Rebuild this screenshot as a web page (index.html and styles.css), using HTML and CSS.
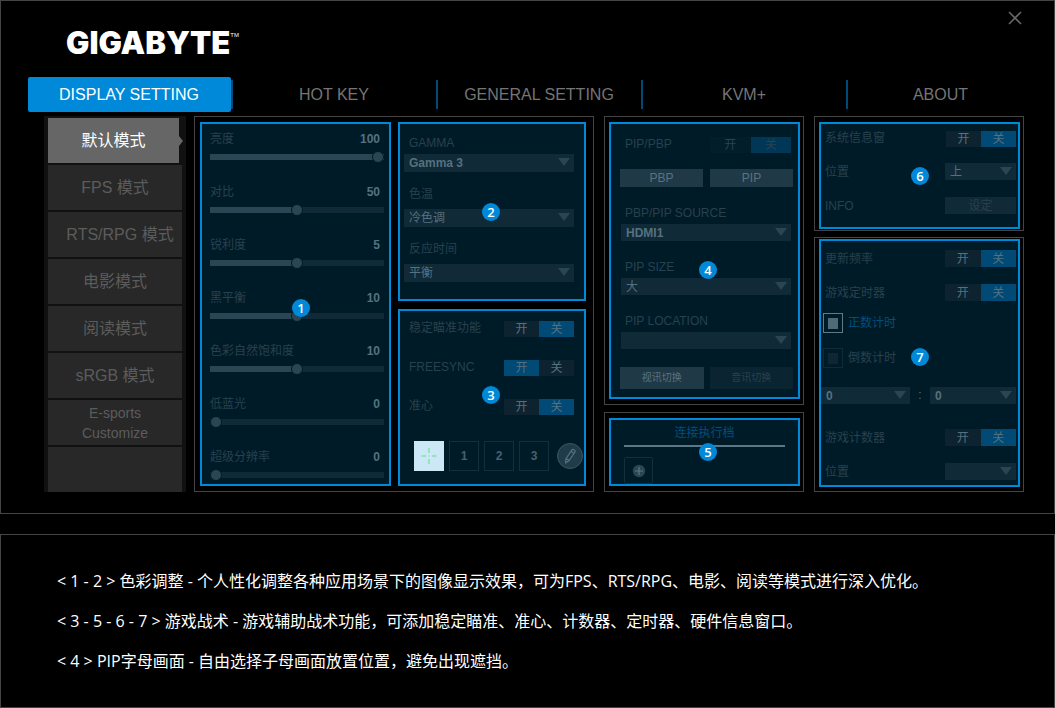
FILE: index.html
```html
<!DOCTYPE html>
<html lang="zh-CN">
<head>
<meta charset="utf-8">
<title>GIGABYTE Display Setting</title>
<link rel="stylesheet" href="styles.css">
</head>
<body>
<main class="page">
  <section class="window">
    <header class="header">
      <h1 class="logo">GIGABYTE<sup class="tm">TM</sup></h1>
      <button class="close" type="button" aria-label="Close">
        <svg width="14" height="14" viewBox="0 0 14 14"><path d="M1 1L13 13M13 1L1 13" stroke="#666" stroke-width="1.6" fill="none"/></svg>
      </button>
    </header>

    <nav class="tabs">
      <button class="tab tab-active" type="button">DISPLAY SETTING</button>
      <button class="tab" type="button">HOT KEY</button>
      <button class="tab" type="button">GENERAL SETTING</button>
      <button class="tab" type="button">KVM+</button>
      <button class="tab" type="button">ABOUT</button>
    </nav>

    <div class="content">
      <nav class="modes">
        <button class="mode mode-active" type="button">默认模式</button>
        <button class="mode" type="button">FPS 模式</button>
        <button class="mode mode-wide" type="button">RTS/RPG 模式</button>
        <button class="mode" type="button">电影模式</button>
        <button class="mode" type="button">阅读模式</button>
        <button class="mode" type="button">sRGB 模式</button>
        <button class="mode mode-small" type="button">E-sports<br>Customize</button>
        <div class="mode"></div>
      </nav>

      <div class="panels">
        <div class="frame frame-main">
          <section class="zone zone-1">
            <div class="slider"><label for="s1">亮度</label><output for="s1">100</output><input id="s1" type="range" value="100" style="--fill:100%"></div>
            <div class="slider"><label for="s2">对比</label><output for="s2">50</output><input id="s2" type="range" value="50" style="--fill:50%"></div>
            <div class="slider"><label for="s3">锐利度</label><output for="s3">5</output><input id="s3" type="range" max="10" value="5" style="--fill:50%"></div>
            <div class="slider"><label for="s4">黑平衡</label><output for="s4">10</output><input id="s4" type="range" max="20" value="10" style="--fill:50%"></div>
            <div class="slider"><label for="s5">色彩自然饱和度</label><output for="s5">10</output><input id="s5" type="range" max="20" value="10" style="--fill:50%"></div>
            <div class="slider"><label for="s6">低蓝光</label><output for="s6">0</output><input id="s6" type="range" max="10" value="0" style="--fill:0%"></div>
            <div class="slider"><label for="s7">超级分辨率</label><output for="s7">0</output><input id="s7" type="range" max="10" value="0" style="--fill:0%"></div>
            <span class="badge">1</span>
          </section>

          <div class="stack">
            <section class="zone zone-2">
              <div class="field field-latin"><label for="gamma">GAMMA</label><div class="select"><select id="gamma"><option>Gamma 3</option></select></div></div>
              <div class="field"><label for="temp">色温</label><div class="select"><select id="temp"><option>冷色调</option></select></div></div>
              <div class="field"><label for="resp">反应时间</label><div class="select"><select id="resp"><option>平衡</option></select></div></div>
              <span class="badge">2</span>
            </section>

            <section class="zone zone-3">
              <div class="row"><span id="l-aim">稳定瞄准功能</span>
                <div class="toggle" role="radiogroup" aria-labelledby="l-aim"><label><input type="radio" name="aim">开</label><label><input type="radio" name="aim" checked>关</label></div></div>
              <div class="row"><span id="l-sync">FREESYNC</span>
                <div class="toggle" role="radiogroup" aria-labelledby="l-sync"><label><input type="radio" name="sync" checked>开</label><label><input type="radio" name="sync">关</label></div></div>
              <div class="row"><span id="l-cross">准心</span>
                <div class="toggle" role="radiogroup" aria-labelledby="l-cross"><label><input type="radio" name="cross">开</label><label><input type="radio" name="cross" checked>关</label></div></div>
              <div class="crosshairs">
                <button class="slot slot-active" type="button" aria-label="Crosshair">
                  <svg width="18" height="18" viewBox="0 0 18 18"><path d="M9 1V6M9 12V17M1.500 9H6M12 9H16.500" stroke="#7fe5a0" stroke-width="1.4"/><circle cx="9" cy="9" r=".8" fill="#7fe5a0"/></svg>
                </button>
                <button class="slot" type="button">1</button>
                <button class="slot" type="button">2</button>
                <button class="slot" type="button">3</button>
                <button class="edit" type="button" aria-label="Edit">
                  <svg width="24" height="24" viewBox="0 0 24 24"><path d="M7.500 19L8 14.500L14 5.800Q14.600 5 15.500 5.600L16.800 6.500Q17.600 7.200 17 8L11.200 16.500Z M12.900 7.300L15.900 9.500M8 14.500L11.200 16.500" stroke="#587080" stroke-width="1.2" fill="none" stroke-linejoin="round"/></svg>
                </button>
              </div>
              <span class="badge">3</span>
            </section>
          </div>
        </div>

        <div class="column column-pip">
          <div class="frame">
            <section class="zone zone-4">
              <div class="row"><span id="l-pip">PIP/PBP</span>
                <div class="toggle toggle-dim" role="radiogroup" aria-labelledby="l-pip"><label><input type="radio" name="pip">开</label><label><input type="radio" name="pip" checked>关</label></div></div>
              <div class="pair"><button class="action" type="button">PBP</button><button class="action" type="button">PIP</button></div>
              <div class="field field-latin"><label for="src">PBP/PIP SOURCE</label><div class="select"><select id="src"><option>HDMI1</option></select></div></div>
              <div class="field field-latin"><label for="size">PIP SIZE</label><div class="select"><select id="size"><option>大</option></select></div></div>
              <div class="field field-latin"><label for="loc">PIP LOCATION</label><div class="select"><select id="loc"><option></option></select></div></div>
              <div class="pair pair-small"><button class="action" type="button">视讯切换</button><button class="action action-dim" type="button">音讯切换</button></div>
              <span class="badge">4</span>
            </section>
          </div>
          <div class="frame frame-grow">
            <section class="zone zone-5">
              <h2 class="link-title">连接执行档</h2>
              <button class="add" type="button" aria-label="Add">
                <svg width="14" height="14" viewBox="0 0 14 14"><circle cx="7" cy="7" r="6.200" fill="#294653"/><path d="M7 3V11M3 7H11" stroke="#5b7785" stroke-width="1.2"/></svg>
              </button>
              <span class="badge">5</span>
            </section>
          </div>
        </div>

        <div class="column column-info">
          <div class="frame frame-info">
            <section class="zone zone-6">
              <div class="row"><span id="l-win">系统信息窗</span>
                <div class="toggle" role="radiogroup" aria-labelledby="l-win"><label><input type="radio" name="win">开</label><label><input type="radio" name="win" checked>关</label></div></div>
              <div class="row"><label for="pos1">位置</label><div class="select"><select id="pos1"><option>上</option></select></div></div>
              <div class="row"><span>INFO</span><button class="set" type="button">设定</button></div>
              <span class="badge">6</span>
            </section>
          </div>
          <div class="frame frame-timer frame-grow">
            <section class="zone zone-7">
              <div class="row"><span id="l-rate">更新频率</span>
                <div class="toggle" role="radiogroup" aria-labelledby="l-rate"><label><input type="radio" name="rate">开</label><label><input type="radio" name="rate" checked>关</label></div></div>
              <div class="row"><span id="l-timer">游戏定时器</span>
                <div class="toggle" role="radiogroup" aria-labelledby="l-timer"><label><input type="radio" name="timer">开</label><label><input type="radio" name="timer" checked>关</label></div></div>
              <div class="checks">
                <label class="check"><input type="checkbox" checked>正数计时</label>
                <label class="check"><input type="checkbox">倒数计时</label>
              </div>
              <div class="time">
                <div class="select"><select aria-label="分"><option>0</option></select></div>
                <span>:</span>
                <div class="select"><select aria-label="秒"><option>0</option></select></div>
              </div>
              <div class="row"><span id="l-count">游戏计数器</span>
                <div class="toggle" role="radiogroup" aria-labelledby="l-count"><label><input type="radio" name="count">开</label><label><input type="radio" name="count" checked>关</label></div></div>
              <div class="row"><label for="pos2">位置</label><div class="select"><select id="pos2"><option></option></select></div></div>
              <span class="badge">7</span>
            </section>
          </div>
        </div>
      </div>
    </div>
  </section>

  <section class="notes">
    <p>&lt; 1 - 2 &gt; 色彩调整 - 个人性化调整各种应用场景下的图像显示效果，可为FPS、RTS/RPG、电影、阅读等模式进行深入优化。</p>
    <p>&lt; 3 - 5 - 6 - 7 &gt; 游戏战术 - 游戏辅助战术功能，可添加稳定瞄准、准心、计数器、定时器、硬件信息窗口。</p>
    <p>&lt; 4 &gt; PIP字母画面 - 自由选择子母画面放置位置，避免出现遮挡。</p>
  </section>
</main>
</body>
</html>
```

FILE: styles.css
```css
:root {
  --blue: #0089d8;
  --zone: #001b28;
  --label: #28414e;
  --value: #557180;
  --field: #102a37;
  --fill-color: #2a4654;
  --on: #004a75;
  --frame: #444;
}

* { box-sizing: border-box; }

body {
  margin: 0;
  background: #000;
  color: #fff;
  font: 12px/16px "Liberation Sans", "Noto Sans CJK SC", sans-serif;
}

button, select, input { font: inherit; color: inherit; margin: 0; padding: 0; border: 0; }
button { background: none; }

.page { display: flex; flex-direction: column; gap: 20px; min-height: 100vh; }
.window { border: 1px solid var(--frame); padding-bottom: 21px; }

/* Header */
.header { display: flex; justify-content: space-between; align-items: flex-start; height: 76px; padding: 10px 32px 0 65px; }
.logo { margin: 14px 0 0; font: 900 31px/36px "Inter", sans-serif; display: flex; align-items: flex-start; }
.tm { font: 400 6px/8px "Liberation Sans", sans-serif; margin-top: 6px; }
.close { width: 14px; height: 14px; }
.close svg { display: block; }

/* Tabs */
.tabs { display: grid; grid-template-columns: repeat(4, 205fr) 188fr; padding: 0 18px 0 27px; }
.tab { position: relative; height: 35px; padding-right: 3px; color: #757575; font-size: 16px; }
.tab:not(:last-child)::after { content: ""; position: absolute; right: 0; top: 3px; bottom: 3px; width: 2px; background: #004a75; }
.tab-active { color: #fff; background: var(--blue); border-radius: 2px; margin-right: 2px; padding-right: 1px; }
.tab-active:not(:last-child)::after { right: -2px; }

/* Modes */
.content { display: flex; gap: 8px; padding: 4px 30px 0 43px; }
.modes { flex: 0 0 142px; display: flex; flex-direction: column; gap: 2px; padding: 2px 4px 0; background: #111; }
.mode { position: relative; flex: 1; background: #282828; color: #5c5c5c; font-size: 16px; }
.mode-active { background: #666; color: #fff; margin-right: 3px; }
.mode-active::after { content: ""; position: absolute; left: 100%; top: 50%; margin-top: -5px; border: 5px solid transparent; border-left: 4px solid #666; border-right: 0; }
.mode-wide { padding-left: 10px; }
.mode-small { font-size: 14px; line-height: 20px; }

/* Panels */
.panels { flex: 1; display: grid; grid-template-columns: 400fr 200fr 210fr; gap: 10px; }
.frame { border: 1px solid var(--frame); padding: 5px 3px 5px 4px; display: grid; }
.frame-main { grid-template-columns: 191fr 188fr; gap: 7px; padding: 5px 7px 5px 5px; }
.frame-info { padding-bottom: 1px; }
.frame-timer { padding-top: 1px; padding-bottom: 4px; }
.frame-grow { flex: 1; }
.stack { display: flex; flex-direction: column; gap: 8px; }
.column { display: flex; flex-direction: column; gap: 7px; }
.column-info { gap: 6px; }

.zone { position: relative; border: 2px solid var(--blue); background: var(--zone); color: var(--label); display: flex; flex-direction: column; }
.badge { position: absolute; width: 18px; height: 18px; border-radius: 50%; background: var(--blue); color: #fff; font: 600 13px/18px "Open Sans", sans-serif; text-align: center; }
.zone-1 .badge { left: 90px; top: 175px; }
.zone-2 .badge { left: 82px; top: 79px; }
.zone-3 .badge { left: 82px; top: 75px; }
.zone-4 .badge { left: 88px; top: 137px; }
.zone-5 .badge { left: 88px; top: 23px; }
.zone-6 .badge { left: 90px; top: 43px; }
.zone-7 .badge { left: 90px; top: 107px; }

/* Sliders */
.zone-1 { padding: 7px 5px 3px 8px; gap: 21px; }
.slider { display: grid; grid-template-columns: 1fr auto; row-gap: 4px; }
.slider output { font-weight: 700; color: var(--value); padding-right: 4px; }
.slider input { grid-column: 1 / -1; width: 100%; height: 12px; appearance: none; background: none; }
.slider input::-webkit-slider-runnable-track { height: 6px; background: linear-gradient(to right, var(--fill-color) var(--fill), var(--field) var(--fill)); }
.slider input::-webkit-slider-thumb { appearance: none; width: 12px; height: 12px; margin-top: -3px; border-radius: 50%; border: 1px solid var(--zone); background: var(--fill-color); }

/* Fields */
.field { display: flex; flex-direction: column; gap: 7px; }
.field-latin { gap: 3px; }
.field label { padding-left: 5px; }
.select { position: relative; height: 17px; background: var(--field); }
.select select { display: block; width: 100%; height: 100%; appearance: none; background: none; color: var(--value); padding: 0 5px; font-weight: 700; line-height: 16px; }
.select::after { content: ""; position: absolute; right: 4px; top: 4px; width: 12px; height: 8px; background: var(--fill-color); clip-path: polygon(0 0, 100% 0, 50% 100%); pointer-events: none; }
.zone-2 { padding: 11px 10px 17px 4px; gap: 14px; }
.zone-2 .select { height: 18px; }
#temp, #resp, #size, #pos1 { font-weight: 400; }

/* Rows and toggles */
.row { display: flex; justify-content: space-between; align-items: center; height: 17px; }
.toggle { display: grid; grid-template-columns: 1fr 1fr; width: 70px; height: 14px; color: var(--value); }
.toggle label { position: relative; display: flex; align-items: center; justify-content: center; background: #0d2430; }
.toggle label:has(:checked) { background: var(--on); }
.toggle input { position: absolute; inset: 0; appearance: none; }
.toggle-dim { width: 81px; color: #264454; }
.toggle-dim label { background: #021e2b; }
.toggle-dim label:has(:checked) { background: #003656; }

.zone-3 { padding: 10px 0 13px 4px; gap: 25px; }
.zone-3 .row { height: 14px; padding: 0 10px 0 5px; }
.crosshairs { display: flex; align-items: center; gap: 5px; padding-left: 10px; margin-top: 3px; }
.slot { width: 30px; height: 30px; border: 1px solid #142f3c; color: #46606e; display: grid; place-items: center; font-weight: 700; }
.slot-active { background: #cce7f6; border-color: #cce7f6; }
.edit { width: 26px; height: 26px; margin-left: 3px; border-radius: 50%; border: 1px solid #3c5664; background: #203b49; display: grid; place-items: center; }

/* PIP */
.zone-4 { padding: 13px 5px 8px 9px; gap: 18px; }
.zone-4 .row { height: 14px; padding: 0 2px 0 5px; }
.zone-4 .field { padding: 0 2px 0 1px; }
.zone-4 .field label { padding-left: 4px; }
.pair { display: grid; grid-template-columns: 1fr 1fr; gap: 7px; }
.action { height: 18px; background: #203947; color: #587380; }
.pair-small { gap: 6px; }
.pair-small .action { height: 22px; font-size: 10px; }
.pair-small .action-dim { background: #0a2431; color: #28414e; }

.zone-5 { padding: 5px 13px 0; align-items: flex-start; }
.link-title { align-self: stretch; margin: 0; padding-bottom: 4px; border-bottom: 2px solid #5b7785; color: #004f7c; font: inherit; text-align: center; }
.add { width: 29px; height: 27px; margin-top: 10px; border: 1px solid #142f3c; border-radius: 2px; display: grid; place-items: center; }

/* Info window and timers */
.zone-6 { padding: 5px 2px 13px 4px; gap: 17px; }
.zone-6 .select, .zone-7 .row .select, .set { width: 71px; }
.set { height: 17px; background: var(--field); }
.zone-7 { padding: 9px 2px 4px 0; gap: 17px; }
.zone-7 .row { padding-left: 4px; }
.zone-7 .toggle { width: 71px; height: 17px; }
.checks { display: flex; flex-direction: column; align-items: flex-start; gap: 15px; margin-top: -5px; }
.check { display: flex; align-items: center; gap: 5px; padding-left: 2px; }
.check:has(:checked) { color: #004f7c; }
.check input { width: 20px; height: 20px; appearance: none; border: 1px solid #102a37; background: linear-gradient(#0e2733, #0e2733) center / 10px 11px no-repeat; }
.check input:checked { border-color: #5f7a88; background-image: linear-gradient(#4f6b79, #4f6b79); }
.time { display: grid; grid-template-columns: 89fr 20px 86fr; color: var(--value); text-align: center; margin: 2px 0 8px; }

/* Notes */
.notes { flex: 1; border: 1px solid var(--frame); padding: 26px 56px; font: 16px/40px "Open Sans", "Noto Sans CJK SC", sans-serif; }
.notes p { margin: 0; }
```
